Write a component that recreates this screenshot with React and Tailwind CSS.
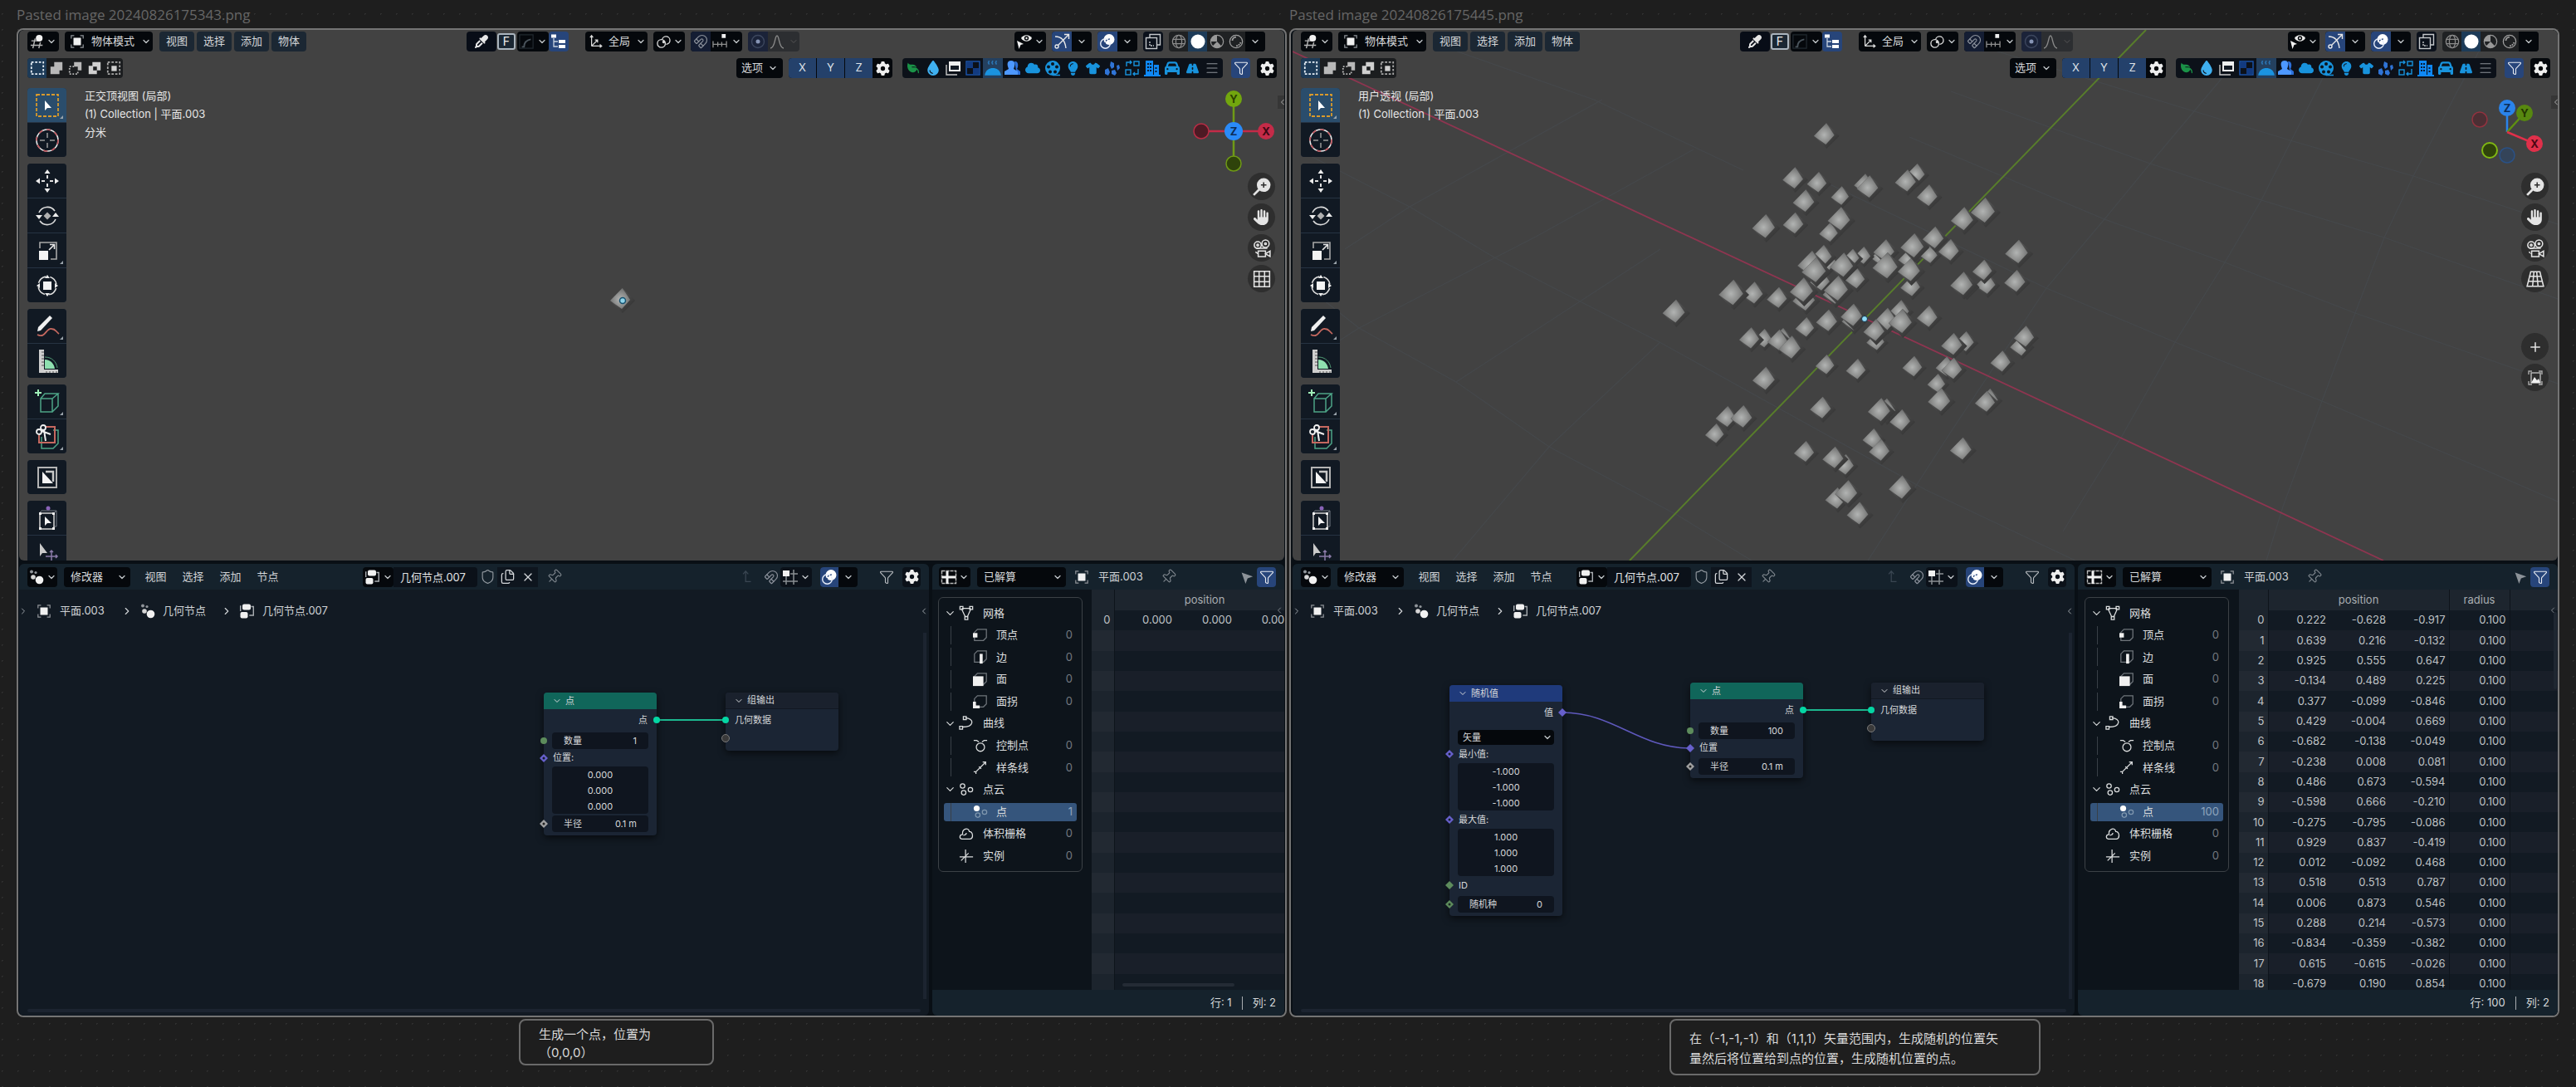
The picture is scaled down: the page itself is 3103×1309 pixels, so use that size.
import React from "react";
import {
  FaLeaf, FaDroplet, FaUserGroup, FaCloud, FaLightbulb, FaShirt, FaBuilding,
  FaCar, FaRoad, FaGear, FaHand, FaEyeDropper,
} from "react-icons/fa6";
import { Pin, Magnet, Funnel, Files, Shield, X, ChevronDown, ChevronRight, ChevronLeft, Menu, Plus } from "lucide-react";

/* ---------- small drawing helpers ---------- */

function Svg({ size = 20, children, className = "" }) {
  return (
    <svg width={size} height={size} viewBox="0 0 20 20" fill="none" stroke="currentColor" strokeWidth="1.4" aria-hidden="true" className={`shrink-0 ${className}`}>
      {children}
    </svg>
  );
}

const Chevron = () => <ChevronDown size={12} strokeWidth={2.5} className="shrink-0 text-[#c4c8cc]" aria-hidden="true" />;

const ObjectIcon = () => (
  <Svg size={18}>
    <path d="M2 6V2h4M14 2h4v4M18 14v4h-4M6 18H2v-4" stroke="#8d9196" />
    <rect x="5" y="5" width="10" height="10" fill="#f0f0f0" stroke="none" />
  </Svg>
);
const ViewportIcon = () => (
  <Svg size={18}>
    <path d="M2 9h9M1 15h16M7 6 4 19M14 11l-2 8" stroke="#b5b5b5" strokeWidth="1.6" />
    <circle cx="12.500" cy="5.500" r="4.500" fill="#f2f2f2" stroke="none" />
  </Svg>
);
const GeoNodesIcon = () => (
  <Svg size={20}>
    <circle cx="4" cy="3.500" r="2" fill="#8f9499" stroke="none" />
    <circle cx="9" cy="4.500" r="1.600" fill="#8f9499" stroke="none" />
    <circle cx="6" cy="10" r="2.800" fill="#d6d6d6" stroke="none" />
    <circle cx="13.500" cy="13.500" r="4.800" fill="#f2f2f2" stroke="none" />
  </Svg>
);
const NodeTreeIcon = () => (
  <Svg size={20}>
    <rect x="4" y="1.500" width="10" height="7" rx="2" fill="#f0f0f0" stroke="none" />
    <rect x="1.500" y="11" width="9" height="7.500" rx="2" fill="#f0f0f0" stroke="none" />
    <path d="M2.500 4h-.8v6M14.500 4.500h2.800v10.500h-5" stroke="#a9adb1" />
  </Svg>
);
const SheetIcon = () => (
  <Svg size={20}>
    <rect x="1.500" y="2.500" width="17" height="15" stroke="#b9b9b9" strokeDasharray="4 1" />
    <path d="M2 10h16.500M8 3v15" stroke="#f2f2f2" strokeWidth="3" />
  </Svg>
);
const CurveBox = () => (
  <Svg size={18}><rect x="1" y="1" width="18" height="18" stroke="#20282f" /><path d="M4 17h3c0-6 3-9 9-10" stroke="#4a545c" strokeWidth="2" /></Svg>
);
const TreeIcon = () => (
  <Svg size={20}>
    <rect x="1" y="1.500" width="6" height="4" fill="#fff" stroke="none" />
    <path d="M4 6v10h5M4 10h5" stroke="#c9d3e0" strokeWidth="1.300" />
    <rect x="10" y="8" width="8" height="4" fill="#fff" stroke="none" /><rect x="10" y="14" width="8" height="4" fill="#fff" stroke="none" />
  </Svg>
);
const AxesIcon = () => (
  <Svg size={18}><path d="M4 16V2M2 4.500 4 2l2 2.500M4 16h13M15 14l2.500 2-2.500 2M4 16 12 8M8.500 8H12v3.500" stroke="#dcdcdc" /></Svg>
);
const LinkIcon = () => (
  <Svg size={19}><circle cx="7" cy="12" r="5" stroke="#dcdcdc" /><path d="M8 7a5 5 0 1 1 5 6" stroke="#dcdcdc" /><circle cx="10" cy="10" r="1.800" fill="#dcdcdc" stroke="none" /></Svg>
);
const IncrementIcon = () => (
  <Svg size={19}><rect x="12" y="0" width="5" height="5" fill="#f0f0f0" stroke="none" /><path d="M1 13h17M1 9v8M7 10v6M12 10v6M18 9v8" stroke="#8e8e8e" /></Svg>
);
const OverlayIcon = () => (
  <Svg size={20}><circle cx="12" cy="7.500" r="6.500" fill="#fff" stroke="none" /><circle cx="7.500" cy="12.500" r="5.800" stroke="#e8eefa" /><path d="M7 13a6 6 0 0 1 6-6" stroke="#27457a" strokeDasharray="2 1.500" /></Svg>
);
const GizmoIcon = () => (
  <Svg size={20}><circle cx="4" cy="16" r="2" stroke="#e8e8e8" /><path d="M5.500 14.500 18 2M13 1.500h5.500V7M2 4c8 0 12 5 13 14" stroke="#e8e8e8" /></Svg>
);
const VisibilityIcon = () => (
  <Svg size={20}><path d="M6 6c3-5 10-5 13 0-3 5-10 5-13 0Z" fill="#ececec" stroke="none" /><circle cx="12.500" cy="6" r="2.700" fill="#05080c" stroke="none" /><circle cx="12.500" cy="6" r="1.200" fill="#ececec" stroke="none" /><path d="M1 9l8 4-3.500 1L3.500 19Z" fill="#f2f2f2" stroke="none" /></Svg>
);
const XrayIcon = () => (
  <Svg size={20}><rect x="1.500" y="5.500" width="13" height="13" stroke="#c4c7ca" /><path d="M6 5V1.500h12.500V14H15" stroke="#c4c7ca" /><path d="M6 10v5h5" stroke="#c4c7ca" strokeDasharray="2 1" /></Svg>
);
const GridSnapIcon = () => (
  <Svg size={20}><path d="M5 9v10M14 1v18M1 15h18M10 6h9" stroke="#8a8f93" strokeWidth="1.500" /><rect x="1" y="2" width="8" height="7" fill="#f0f0f0" stroke="none" /></Svg>
);
const ParentArrow = () => <Svg size={18}><path d="M8 2v14h7M4.500 6 8 2l3.500 4" stroke="#3a4652" /></Svg>;
const CursorIcon = () => <Svg size={16}><path d="M2 3l17 6-8 3-3 8Z" fill="#8c9298" stroke="none" /></Svg>;

/* ---------- viewport header ---------- */

const dark = "flex h-6 items-center justify-center rounded bg-[#05080c]";

function MenuButton({ children }) {
  return <button className="h-6 w-[42px] rounded bg-[#1b2733] text-center text-[#d4d6d8]">{children}</button>;
}

function Pick({ label, options, className, icon }) {
  return (
    <div className={`flex h-6 items-center rounded bg-[#05080c] ${className}`}>
      {icon}
      <select aria-label={label} className="min-w-0 flex-1 appearance-none bg-transparent text-[#d8dadc] outline-none">
        {options.map((o) => <option key={o}>{o}</option>)}
      </select>
      <Chevron />
    </div>
  );
}

function IconButton({ label, className = "", children }) {
  return <button aria-label={label} className={`flex h-6 shrink-0 items-center justify-center ${className}`}>{children}</button>;
}

const SELECT_MODES = [
  <><rect x="2" y="2" width="16" height="16" stroke="#e6eef5" strokeDasharray="3 2" strokeWidth="2" /></>,
  <><path d="M7 2h11v11h-4v5H2V8h5Z" fill="#b8b8b8" stroke="none" /></>,
  <><path d="M8 2h10v11h-5V8H8Z" fill="#b8b8b8" stroke="none" /><path d="M8 8H2v10h11v-5" stroke="#b8b8b8" strokeDasharray="2 2" strokeWidth="2" /></>,
  <><path d="M7 2h11v11h-5v5H2V7h5Z M8 8v5h5V8Z" fill="#d0d0d0" fillRule="evenodd" stroke="none" /></>,
  <><rect x="2" y="2" width="16" height="16" stroke="#a8a8a8" strokeDasharray="3 2" strokeWidth="2" /><rect x="7" y="7" width="7" height="7" fill="#d0d0d0" stroke="none" /></>,
];

const ASSET_ICONS = [
  ["植物", <FaLeaf size={14} className="-scale-x-100 text-[#1a9247]" />],
  ["液体", <FaDroplet size={18} className="text-[#3fb0f0]" />],
  ["窗口", <Svg><path d="M5 2h14v12H5Z" fill="#eee" stroke="none" /><path d="M7 7h10v5H7Z" fill="#131a24" stroke="none" /><path d="M2 6v12h13" stroke="#c8c8c8" /></Svg>],
  ["棋盘", <Svg><rect x="2" y="2" width="16" height="16" stroke="#1b55b0" /><path d="M3 3h7v7H3ZM10 10h7v7h-7Z" fill="#123a80" stroke="none" /></Svg>],
  ["烟雾", <Svg size={22}><path d="M1 18c1-6 5-8 9-8s8 2 9 8Z" fill="#1a93e0" stroke="none" /><path d="M6 2l-1 2 1 2M10 2 9 4l1 2M14 2l-1 2 1 2" stroke="#2c76b5" /></Svg>],
  ["人物", <Svg><path d="M12 2c5-1 5 6 3 9l4 3v4h-4Z" fill="#2c6fd8" stroke="none" /><path d="M8 1c4 0 5 3 4 7l-1 3 5 3v4H0v-4l5-3-1-3C3 4 4 1 8 1Z" fill="#4d98ff" stroke="none" /></Svg>],
  ["云", <FaCloud size={18} className="text-[#1893dd]" />],
  ["胶片", <Svg><circle cx="10" cy="10" r="9" fill="#1893dd" stroke="none" /><path d="M10 18.500h9" stroke="#1893dd" />{[[10, 5], [15, 8.5], [13, 14.5], [7, 14.5], [5, 8.5]].map(([x, y]) => <circle key={x} cx={x} cy={y} r="2" fill="#0c141d" stroke="none" />)}</Svg>],
  ["灯光", <FaLightbulb size={17} className="text-[#1893dd]" />],
  ["布料", <FaShirt size={17} className="text-[#1893dd]" />],
  ["石块", <Svg><path d="M8 2l4 2v5l-3 2-2-4ZM1 12l4-2 2 5-2 4-4-2ZM9 13l4-1 2 4-2 3-4-2ZM15 7l3-1 1 4-3 3Z" fill="#2f74d6" stroke="none" /></Svg>],
  ["替换", <Svg><rect x="12" y="2" width="6" height="5" stroke="#1893dd" /><rect x="2" y="12" width="6" height="6" stroke="#1893dd" /><path d="M3 8V3h6M7 1l2 2-2 2M17 11v6h-6M13 15l-2 2 2 2" stroke="#1893dd" /></Svg>],
  ["建筑", <Svg><path d="M2 1h9v18H2ZM12 6h6v13h-6ZM0 18h20v2H0Z" fill="#0f88f5" stroke="none" /><path d="M4 5h5M4 9h5M4 13h5M13.500 10h3M13.500 14h3" stroke="#0a1c33" strokeDasharray="2 1" strokeWidth="2" /></Svg>],
  ["车辆", <FaCar size={18} className="text-[#1893dd]" />],
  ["道路", <FaRoad size={15} className="text-[#1893dd]" />],
  ["列表", <Menu size={18} strokeWidth={1.5} className="text-[#8d9399]" />],
];

const SHADING = [
  ["线框", <><circle cx="10" cy="10" r="8.500" stroke="#8c8c8c" /><ellipse cx="10" cy="10" rx="4" ry="8.500" stroke="#8c8c8c" /><path d="M2 7h16M2 13h16" stroke="#8c8c8c" /></>],
  ["实体", <><circle cx="10" cy="10" r="9.500" fill="#fff" stroke="none" /></>],
  ["材质", <><circle cx="10" cy="10" r="8.500" stroke="#989898" /><path d="M10 1.500v8.500H1.500A8.500 8.500 0 0 1 10 1.500Zm0 8.500 6 6a8.500 8.500 0 0 1-12 0Z" fill="#989898" stroke="none" /></>],
  ["渲染", <><circle cx="10" cy="10" r="8.500" stroke="#a0a0a0" /><path d="M5 9a5 5 0 0 1 5-5" stroke="#a0a0a0" strokeWidth="2" /><path d="M16 11a7 7 0 0 1-6 5" stroke="#a0a0a0" strokeWidth="2" strokeDasharray="2 1" /></>],
];

function ViewportHeader() {
  return (
    <>
      <div className="flex h-[26px] items-start pt-0.5">
        <button aria-label="编辑器类型" className={`${dark} w-[38px] gap-0.5`}><ViewportIcon /><Chevron /></button>
        <Pick label="模式" options={["物体模式"]} className="ml-[7px] w-[106px] gap-2 pl-1.5 pr-0.5" icon={<ObjectIcon />} />
        <nav className="ml-2 flex gap-[3px]">
          {["视图", "选择", "添加", "物体"].map((m) => <MenuButton key={m}>{m}</MenuButton>)}
        </nav>
        <div className="ml-[193px] flex h-6 items-center">
          <IconButton label="吸管" className="w-9 rounded bg-[#080d17]"><FaEyeDropper size={16} className="text-[#e6e6e6]" /></IconButton>
          <button className="ml-px flex h-5 w-[22px] items-center justify-center rounded-[3px] border-2 border-[#aab4bd] bg-[#1b2733] text-[14px] leading-none text-[#eee]">F</button>
          <IconButton label="曲线" className="ml-0.5 w-[38px] gap-1 rounded bg-[#05080c]"><CurveBox /><Chevron /></IconButton>
          <IconButton label="大纲" className="w-6 rounded bg-[#27457a]"><TreeIcon /></IconButton>
          <Pick label="变换坐标系" options={["全局"]} className="ml-5 w-[75px] gap-1.5 pl-1 pr-0.5" icon={<AxesIcon />} />
          <IconButton label="轴心点" className="ml-[7px] w-[38px] gap-0.5 rounded bg-[#05080c]"><LinkIcon /><Chevron /></IconButton>
          <div className="ml-[7px] flex rounded bg-[#05080c]">
            <IconButton label="吸附" className="w-6 rounded-l bg-[#141d33]"><Magnet size={18} strokeWidth={1.500} className="text-[#8b919b]" /></IconButton>
            <IconButton label="吸附方式" className="w-[38px] gap-1"><IncrementIcon /><Chevron /></IconButton>
          </div>
          <div className="ml-[7px] flex rounded bg-[#2c2e31]">
            <IconButton label="衰减编辑" className="w-6 rounded-l bg-[#1b2339]"><Svg><circle cx="10" cy="10" r="7.500" stroke="#3d475e" /><circle cx="10" cy="10" r="2.500" fill="#8795b5" stroke="none" /></Svg></IconButton>
            <IconButton label="衰减类型" className="w-[38px] gap-1"><Svg><path d="M2 18C8 18 7 3 10 3s2 15 8 15" stroke="#888" /></Svg><ChevronDown size={12} className="text-[#555]" aria-hidden="true" /></IconButton>
          </div>
        </div>
        <div className="ml-auto flex pr-[23px]">
          <button aria-label="可见性" className={`${dark} w-[38px] gap-0.5`}><VisibilityIcon /><Chevron /></button>
          <div className="ml-[7px] flex overflow-hidden rounded bg-[#05080c]">
            <IconButton label="显示控件" className="w-6 bg-[#27457a]"><GizmoIcon /></IconButton>
            <IconButton label="控件选项" className="w-6"><Chevron /></IconButton>
          </div>
          <div className="ml-[7px] flex overflow-hidden rounded bg-[#05080c]">
            <IconButton label="显示叠加层" className="w-6 bg-[#27457a]"><OverlayIcon /></IconButton>
            <IconButton label="叠加层选项" className="w-6"><Chevron /></IconButton>
          </div>
          <IconButton label="透视模式" className="ml-[7px] w-6 rounded bg-[#0b111b]"><XrayIcon /></IconButton>
          <div className="ml-[7px] flex overflow-hidden rounded bg-[#1f2123]">
            {SHADING.map(([n, d], i) => (
              <IconButton key={n} label={n} className={i === 1 ? "w-[23px] bg-[#1d3b58]" : "w-[23px]"}><Svg size={18}>{d}</Svg></IconButton>
            ))}
            <IconButton label="着色选项" className="w-6 bg-[#05080c]"><Chevron /></IconButton>
          </div>
        </div>
      </div>
      <div className="mt-2 flex h-6 items-center">
        <div className="flex h-6 overflow-hidden rounded bg-[#1b1d1f]">
          {SELECT_MODES.map((d, i) => (
            <IconButton key={i} label={`选择模式 ${i + 1}`} className={i === 0 ? "w-[23px] bg-[#1d3b58]" : "w-[23px]"}><Svg size={18}>{d}</Svg></IconButton>
          ))}
        </div>
        <div className="ml-auto flex pr-[9px]">
          <button className={`${dark} w-14 gap-1.5 text-[#d8dadc]`}>选项<Chevron /></button>
          <div className="ml-[7px] flex overflow-hidden rounded bg-[#05080c]">
            <div className="flex gap-px">
              {["X", "Y", "Z"].map((a) => <button key={a} className="h-6 w-[33px] bg-[#24416b] text-[#dfe3e8]">{a}</button>)}
            </div>
            <IconButton label="镜像设置" className="w-6"><FaGear size={17} className="text-[#eee]" /></IconButton>
          </div>
          <div className="ml-3 flex overflow-hidden rounded bg-[#0c1119] px-px">
            {ASSET_ICONS.map(([n, icon]) => (
              <IconButton key={n} label={n} className={n === "烟雾" ? "w-6 bg-[#24405f]" : "w-6"}>{icon}</IconButton>
            ))}
          </div>
          <IconButton label="过滤" className="ml-2.5 w-[23px] rounded bg-[#27457a]"><Funnel size={18} strokeWidth={1.500} className="text-[#e6eaf0]" /></IconButton>
          <IconButton label="设置" className="ml-2 w-6 rounded bg-[#05080c]"><FaGear size={17} className="text-[#eee]" /></IconButton>
        </div>
      </div>
    </>
  );
}

/* ---------- tool shelf ---------- */

const TOOL_GROUPS = [
  [
    ["框选", <><rect x="2" y="2" width="26" height="26" stroke="#d99a2b" strokeDasharray="4 2" strokeWidth="1.800" /><path d="M12 9v12l3-3h5Z" fill="#fff" stroke="none" /></>, true],
    ["游标", <><circle cx="15" cy="15" r="13" stroke="#e8e8e8" strokeWidth="1.600" /><circle cx="15" cy="15" r="13" stroke="#c0545c" strokeDasharray="5 5" strokeWidth="1.600" /><path d="M15 6v6M15 18v6M6 15h6M18 15h6" stroke="#9a9a9a" strokeWidth="1.500" /></>],
  ],
  [
    ["移动", <><path d="M15 8v4M15 18v4M8 15h4M18 15h4" stroke="#e0e0e0" strokeWidth="2" /><path d="m15 1 3.500 5h-7ZM15 29l3.500-5h-7ZM1 15l5-3.500v7ZM29 15l-5-3.500v7Z" fill="#ececec" stroke="none" /></>],
    ["旋转", <><path d="M5 11a11 11 0 0 1 19-2M25 19a11 11 0 0 1-19 2" stroke="#dcdcdc" strokeWidth="1.600" /><path d="M15 10.500l4.500 4.500-4.500 4.500-4.500-4.500Z" fill="#b0b0b0" stroke="none" /><path d="m1 14h8l-4 5ZM21 16h8l-4-5Z" fill="#ececec" stroke="none" /></>],
    ["缩放", <><path d="M6 12V5h20v20h-7" stroke="#a8a8a8" strokeWidth="1.600" /><rect x="5" y="15" width="11" height="11" fill="#f4f4f4" stroke="none" /><path d="M17 14l6-6M18 7.500h5.500V13" stroke="#e8e8e8" strokeWidth="1.600" /></>, true],
    ["变换", <><circle cx="15" cy="15" r="11" stroke="#dcdcdc" strokeDasharray="12 5.300" strokeDashoffset="-3" strokeWidth="1.600" /><rect x="10" y="10" width="10" height="10" fill="#f4f4f4" stroke="none" /><path d="m15 2 3 4h-6ZM15 28l3-4h-6ZM2 15l4-3v6ZM28 15l-4-3v6Z" fill="#ececec" stroke="none" /></>],
  ],
  [
    ["标注", <><path d="M18 2l3 3L7 20l-4 1 1-5Z" fill="#f0f0f0" stroke="none" /><path d="M3 25c10 5 10-8 17-7 5 0 5 3 9 6" stroke="#c4685f" strokeWidth="1.800" /></>, true],
    ["测量", <><path d="M5 1h6v24h17v4H5Z" fill="#cfcfcf" stroke="none" /><path d="M11 4H8M11 8H8M11 12H8M11 16H8M11 20H8M14 29v-2M18 29v-2M22 29v-2M26 29v-2" stroke="#555" /><path d="M12 13c7 0 11 5 12 11H12Z" fill="#8fe0b0" stroke="none" /><path d="M12 10c9 0 14 6 15 13" stroke="#4f9a74" /></>],
  ],
  [
    ["添加立方体", <><path d="M0 4h8M4 0v8" stroke="#9ff0b8" strokeWidth="2" /><path d="M7 11h14v16H7ZM7 11l5-6h16l-7 6M28 5v15l-7 7" stroke="#4da487" strokeWidth="1.500" /></>, true],
    ["切刀", <><path d="M8 15v14h14l6-6V7h-6" stroke="#4da487" strokeWidth="1.500" /><path d="M12 3h12v19H5V13" stroke="#c4685f" strokeWidth="2" /><circle cx="10" cy="4" r="3" stroke="#f0f0f0" strokeWidth="1.800" /><circle cx="5" cy="9" r="3" stroke="#f0f0f0" strokeWidth="1.800" /><path d="M11 7l2 13M8 8l11 4" stroke="#f0f0f0" strokeWidth="2" /></>, true],
  ],
  [["遮罩", <><rect x="4" y="3" width="22" height="24" stroke="#b4b4b4" strokeWidth="2" /><path d="M9 8v14h13Z" fill="#f4f4f4" stroke="none" /><path d="M13 8h9v12" stroke="#c8c8c8" strokeWidth="2.500" /></>]],
  [
    ["框架编辑", <><path d="M8 6h18v19h-4M8 6l-3 3M26 6l-3 3" stroke="#777d86" /><circle cx="16" cy="3" r="2.500" fill="#8a63b8" stroke="none" /><rect x="6" y="9" width="17" height="19" stroke="#c8c8c8" strokeWidth="1.600" /><path d="M5 8h3v3H5ZM21 8h3v3h-3ZM5 26h3v3H5ZM21 26h3v3h-3Z" fill="#eee" stroke="none" /><path d="M12 13v11l3-3h5Z" fill="#f4f4f4" stroke="none" /></>],
    ["选择移动", <><path d="M6 3v16l3-4h6Z" fill="#c9c9c9" stroke="none" /><path d="M20 12v14M13 19h14M18 14l2-2 2 2M25 17l2 2-2 2" stroke="#8a7aa8" strokeWidth="1.500" /></>],
  ],
];

function ToolShelf() {
  return (
    <div className="flex w-[47px] flex-col gap-2 pt-0.5">
      {TOOL_GROUPS.map((group, g) => (
        <div key={g} className="flex flex-col gap-px overflow-hidden rounded bg-[#263342]">
          {group.map(([name, drawing, corner], i) => (
            <button key={name} aria-label={name} className={`relative flex h-[41px] items-center justify-center ${g === 0 && i === 0 ? "bg-[#2a4d6c]" : "bg-[#111923]"}`}>
              <svg width="30" height="30" viewBox="0 0 30 30" fill="none" aria-hidden="true">{drawing}</svg>
              {corner && <span className="absolute bottom-1 right-1 border-b-4 border-l-4 border-b-[#9aa3ab] border-l-transparent" />}
            </button>
          ))}
        </div>
      ))}
    </div>
  );
}

/* ---------- gizmos ---------- */

function TopGizmo() {
  return (
    <svg width="100" height="100" viewBox="0 0 100 100" className="font-bold" fontSize="13" textAnchor="middle" aria-label="视图方向">
      <path d="M50 12v76" stroke="#6f9a16" strokeWidth="2.500" /><path d="M11 50h78" stroke="#c42b48" strokeWidth="2.500" />
      <circle cx="50" cy="11" r="10" fill="#72a60e" /><circle cx="50" cy="89" r="9" fill="#2f430b" stroke="#6f9a16" strokeWidth="1.500" />
      <circle cx="11" cy="50" r="9" fill="#4d1a24" stroke="#b92c45" strokeWidth="1.500" /><circle cx="89" cy="50" r="10" fill="#c42b48" />
      <circle cx="50" cy="50" r="11" fill="#2a8bf8" />
      <text x="50" y="16" fill="#2b4200">Y</text><text x="89" y="55" fill="#3c0713">X</text><text x="50" y="55" fill="#0c2c57">Z</text>
    </svg>
  );
}
function UserGizmo() {
  return (
    <svg width="100" height="100" viewBox="0 0 100 100" className="font-bold" fontSize="13" textAnchor="middle" aria-label="视图方向">
      <circle cx="17" cy="36" r="9" fill="#4b2f34" stroke="#92323f" strokeWidth="1.500" />
      <circle cx="50" cy="79" r="9" fill="#344459" stroke="#2a5186" strokeWidth="1.500" />
      <path d="M50 51V22" stroke="#2a83ea" strokeWidth="2.500" /><path d="M50 51 71 28" stroke="#5f8f12" strokeWidth="2.500" /><path d="m50 51 33 14" stroke="#e0304a" strokeWidth="2.500" />
      <circle cx="29" cy="73" r="9" fill="#2f430b" stroke="#80b813" strokeWidth="2" />
      <circle cx="71" cy="28" r="10" fill="#578810" /><circle cx="50" cy="22" r="10" fill="#2a83ea" /><circle cx="83" cy="65" r="10" fill="#e0304a" />
      <text x="71" y="33" fill="#223600">Y</text><text x="50" y="27" fill="#0c2c57">Z</text><text x="83" y="70" fill="#4c0713">X</text>
    </svg>
  );
}

function NavButton({ label, className = "", children }) {
  return <button aria-label={label} className={`flex h-[33px] w-[33px] items-center justify-center rounded-full bg-[#2e2e2e] text-[#e4e4e4] ${className}`}>{children}</button>;
}

function NavButtons({ user }) {
  return (
    <div className="flex flex-col gap-1">
      <NavButton label="缩放"><Svg size={22}><circle cx="12" cy="8" r="7.500" fill="#e4e4e4" stroke="none" /><path d="M12 5v6M9 8h6" stroke="#2e2e2e" /><path d="m7 13-6 6" strokeWidth="2.500" /></Svg></NavButton>
      <NavButton label="平移"><FaHand size={19} /></NavButton>
      <NavButton label="摄像机"><Svg size={22}><circle cx="5.500" cy="6.500" r="3.800" /><circle cx="14" cy="5" r="4" /><circle cx="5.500" cy="6.500" r="1" /><circle cx="14" cy="5" r="1" /><path d="M6 13h8v6H6ZM14 16l5-3v6ZM3 14l3 2M4 10h12" /></Svg></NavButton>
      <NavButton label="切换投影">
        {user
          ? <Svg size={22}><path d="M5 2h10l4 16H1ZM3.500 7h13M2.500 12.500h15M8.500 2l-1.500 16M11.500 2l1.500 16" /></Svg>
          : <Svg size={22}><path d="M1.500 1.500h17v17h-17ZM7 1.500v17M13 1.500v17M1.500 7h17M1.500 13h17" /></Svg>}
      </NavButton>
      {user && (
        <>
          <NavButton label="添加" className="mt-[45px]"><Plus size={18} strokeWidth={2} /></NavButton>
          <NavButton label="参考图像"><Svg size={20}><path d="M2 6V2h4M14 2h4v4M18 14v4h-4M6 18H2v-4" stroke="#aaa" /><rect x="5" y="4" width="11" height="12" stroke="#bbb" /><path d="m5 16 4-7 3 4 2-2 2 5Z" fill="#f0f0f0" stroke="none" /></Svg></NavButton>
        </>
      )}
    </div>
  );
}

/* ---------- 3D canvas ---------- */

function Octahedron({ x, y, r }) {
  const a = r / 46;
  const light = [[-46, 0], [-1, -46], [28, -3], [-3, 31]].map(([px, py]) => `${x + px * a},${y + py * a}`).join(" ");
  const full = [[-46, 0], [-1, -46], [46, 0], [0, 46]].map(([px, py]) => `${x + px * a},${y + py * a}`).join(" ");
  return <g><polygon points={full} fill="url(#edge)" /><polygon points={light} fill="url(#facet)" /></g>;
}

const Shades = () => (
  <defs>
    <radialGradient id="facet" cx="0.5" cy="0.55" r="0.6"><stop offset="0" stopColor="#b2b4b3" /><stop offset="0.5" stopColor="#8e8f8e" /><stop offset="1" stopColor="#666767" /></radialGradient>
    <linearGradient id="edge" x1="0" y1="0" x2="1" y2="1"><stop offset="0.4" stopColor="#505050" /><stop offset="1" stopColor="#282828" /></linearGradient>
  </defs>
);

/* [x, y, radius] in thirds of a pixel, farthest first */
const POINTS = [
  [361, 71, 46], [248, 230, 46], [334, 245, 44], [287, 313, 48], [143, 405, 51], [249, 393, 46], [417, 293, 40],
  [502, 250, 42], [518, 262, 48], [690, 213, 42], [655, 240, 47], [733, 293, 46], [376, 425, 42], [415, 378, 50],
  [936, 348, 54], [860, 378, 50], [738, 505, 38], [811, 490, 46], [755, 445, 47], [1057, 497, 51], [1050, 602, 47],
  [944, 612, 44], [932, 562, 44], [868, 618, 46], [858, 612, 50], [560, 512, 38], [577, 492, 47], [583, 548, 56],
  [660, 520, 40], [672, 620, 44], [668, 562, 50], [680, 475, 52], [497, 508, 37], [457, 515, 36], [472, 592, 44],
  [370, 530, 42], [352, 510, 45], [345, 600, 44], [425, 545, 52], [310, 540, 54], [325, 563, 54], [395, 645, 48],
  [405, 630, 54], [288, 668, 50], [280, 635, 52], [190, 662, 45], [102, 645, 47], [26, 645, 55], [-182, 712, 50],
  [462, 742, 46], [460, 725, 48], [370, 745, 47], [290, 768, 42], [138, 808, 40], [90, 808, 45], [205, 805, 40],
  [192, 815, 45], [237, 842, 49], [363, 903, 42], [475, 920, 44], [632, 708, 44], [583, 740, 48], [637, 754, 46],
  [637, 748, 52], [545, 818, 40], [541, 780, 47], [733, 730, 46], [679, 910, 44], [867, 820, 43], [822, 830, 47],
  [797, 910, 42], [822, 918, 46], [765, 970, 40], [777, 1032, 50], [1068, 835, 44], [1083, 802, 45], [998, 892, 45],
  [953, 1028, 44], [942, 1037, 45], [143, 955, 50], [348, 1060, 47], [-36, 1152, 42], [5, 1092, 45], [62, 1092, 48],
  [580, 1067, 48], [560, 1068, 50], [635, 1105, 46], [533, 1170, 42], [560, 1213, 46], [288, 1218, 45],
  [432, 1265, 44], [393, 1240, 47], [402, 1387, 46], [441, 1365, 50], [482, 1442, 48], [636, 1348, 50], [855, 1208, 48],
];

function UserScene() {
  return (
    <svg width="1524" height="639" viewBox="1557 36 1524 639" className="absolute left-0 top-0" aria-hidden="true">
      <Shades />
      <g stroke="#45484b" strokeWidth="1.200" fill="none">
        <path d="M2400 60 2630 130 2762 170 2907 212 3081 270M2350 110 2590 197 2724 241 2872 286 3081 360M2300 165 2535 264 2680 316 2837 377 3081 462M2200 220 2465 347 2620 412 2797 483 2989 564 3081 604M1567 182 1698 249 1800 310 1999 412 2320 590 2500 675M1580 350 1637 395 1754 460 1866 538 2020 620 2110 675M1750 60 1920 120 2100 205" />
        <path d="M3000 36 2960 110 2907 212 2872 286 2837 377 2797 483 2750 610 2730 675M2800 90 2724 241 2680 316 2620 412 2555 527 2485 640M2680 90 2590 197 2535 264 2465 347 2350 520 2250 675M1620 300 1698 249 1930 120M1637 395 1850 285 2040 180M1567 440 1637 395M1754 460 2000 300M1750 675 1866 538 2000 412" />
      </g>
      <path d="M1557 62 2871 675" stroke="#8e3550" strokeWidth="1.800" />
      <path d="M1963 675 2585 36" stroke="#587d2b" strokeWidth="2" />
      <g transform="translate(2080 140) scale(0.3333)">{POINTS.map(([x, y, r], i) => <Octahedron key={i} x={x} y={y} r={r} />)}</g>
      <circle cx="2246" cy="384" r="3.500" fill="#8fdcf8" stroke="#16324a" />
    </svg>
  );
}
function TopScene() {
  return (
    <svg width="40" height="40" viewBox="0 0 40 40" className="absolute left-[707px] top-[306px]" aria-hidden="true">
      <Shades />
      <Octahedron x={20} y={20} r={15} />
      <circle cx="20" cy="20" r="3.500" fill="#8fd4ea" stroke="#14506e" strokeWidth="1.500" />
    </svg>
  );
}

function Viewport({ user, lines }) {
  return (
    <section className="relative h-[639px] overflow-hidden rounded-md bg-[#424242]">
      {user ? <UserScene /> : <TopScene />}
      <div className="relative pl-2.5">
        <ViewportHeader />
        <div className="mt-2.5 flex gap-[22px]">
          <ToolShelf />
          <div className="leading-[22px] text-[#e6e6e6]">{lines.map((l) => <p key={l}>{l}</p>)}</div>
        </div>
      </div>
      <div className="absolute right-[11px] top-[72px]">{user ? <UserGizmo /> : <TopGizmo />}</div>
      <div className="absolute right-[11px] top-[172px]"><NavButtons user={user} /></div>
      <button aria-label="展开侧栏" className="absolute right-0 top-[79px] flex h-4 w-2 items-center bg-[#363636] text-[#aaa]"><ChevronLeft size={12} className="shrink-0" /></button>
    </section>
  );
}

/* ---------- node editor ---------- */

const SOCKETS = {
  geo: <circle cx="6" cy="6" r="4" fill="#04d6a4" />,
  int: <circle cx="6" cy="6" r="4" fill="#5d8c5c" />,
  empty: <circle cx="6" cy="6" r="4.500" fill="#3a3a3a" stroke="#7a7a7a" />,
  vector: <path d="m6 1 5 5-5 5-5-5Z" fill="#6760cc" />,
  vectorField: <><path d="m6 1 5 5-5 5-5-5Z" fill="#6760cc" /><circle cx="6" cy="6" r="1.500" fill="#151c2c" /></>,
  floatField: <><path d="m6 1 5 5-5 5-5-5Z" fill="#a1a1a1" /><circle cx="6" cy="6" r="1.500" fill="#222" /></>,
  intPlain: <path d="m6 1 5 5-5 5-5-5Z" fill="#5d8c5c" />,
  intField: <><path d="m6 1 5 5-5 5-5-5Z" fill="#5d8c5c" /><circle cx="6" cy="6" r="1.500" fill="#1a2a20" /></>,
};

function Socket({ kind, out }) {
  return (
    <svg width="12" height="12" viewBox="0 0 12 12" aria-hidden="true" className={`absolute top-1/2 -translate-y-1/2 ${out ? "-right-1.5" : "-left-1.5"}`}>{SOCKETS[kind]}</svg>
  );
}

function Node({ title, headClass, className, children }) {
  return (
    <div className={`absolute w-[136px] rounded bg-[#1b2534] text-[11px] text-[#d6d8da] shadow-[0_3px_8px_rgba(0,0,0,0.6)] ${className}`}>
      <div className={`flex h-5 items-center gap-1 rounded-t pl-2.5 ${headClass}`}><ChevronDown size={12} strokeWidth={2} aria-hidden="true" />{title}</div>
      {children}
    </div>
  );
}

function Out({ kind, children }) {
  return <div className="relative flex h-[26px] items-center justify-end pr-[11px]">{children}<Socket kind={kind} out /></div>;
}
function In({ kind, className = "h-[21px]", children }) {
  return <div className={`relative flex items-center pl-[11px] ${className}`}><Socket kind={kind} />{children}</div>;
}
function Field({ kind, label, value }) {
  return (
    <div className="relative mt-0.5 px-2.5">
      <Socket kind={kind} />
      <label className="flex h-5 items-center justify-between rounded-sm bg-[#0f151f] px-3.5">
        <span className="shrink-0">{label}</span>
        <input defaultValue={value} className="w-12 min-w-0 bg-transparent text-right outline-none" />
      </label>
    </div>
  );
}
function Vector({ label, values }) {
  return (
    <div className="px-2.5">
      <div className="rounded-sm bg-[#0f151f]">
        {values.map((v, i) => <input key={i} aria-label={`${label} ${"XYZ"[i]}`} defaultValue={v} className="block h-[19px] w-full bg-transparent text-center outline-none" />)}
      </div>
    </div>
  );
}

const GEO_HEAD = "bg-[#10665a]";
const OUT_HEAD = "bg-[#1a212d] border-b border-[#111822]";

function OutputNode({ className }) {
  return (
    <Node title="组输出" headClass={OUT_HEAD} className={className}>
      <In kind="geo" className="h-[26px]">几何数据</In>
      <In kind="empty" className="mb-1.5 h-[18px]" />
    </Node>
  );
}

function SingleGraph() {
  return (
    <>
      <svg width="1000" height="400" viewBox="0 0 1000 400" className="absolute left-0 top-0" aria-hidden="true"><path d="M768 188h83" stroke="#1cb88f" strokeWidth="2" /></svg>
      <Node title="点" headClass={GEO_HEAD} className="left-[632px] top-[155px] pb-1">
        <Out kind="geo">点</Out>
        <Field kind="int" label="数量" value="1" />
        <In kind="vectorField">位置:</In>
        <Vector label="位置" values={["0.000", "0.000", "0.000"]} />
        <Field kind="floatField" label="半径" value="0.1 m" />
      </Node>
      <OutputNode className="left-[851px] top-[155px]" />
    </>
  );
}

function RandomGraph() {
  return (
    <>
      <svg width="900" height="400" viewBox="0 0 900 400" fill="none" className="absolute left-0 top-0" aria-hidden="true">
        <path d="M615 176h82" stroke="#1cb88f" strokeWidth="2" /><path d="M325 179c62 0 92 43 154 43" stroke="#5f59bd" strokeWidth="1.500" />
      </svg>
      <Node title="随机值" headClass="bg-[#1f3a7b]" className="left-[189px] top-[146px] pb-1">
        <Out kind="vector">值</Out>
        <div className="mt-2 px-2.5">
          <div className="flex h-[18px] items-center rounded-sm bg-[#05080c] pl-1.5 pr-0.5">
            <select aria-label="数据类型" className="min-w-0 flex-1 appearance-none bg-transparent outline-none"><option>矢量</option></select><Chevron />
          </div>
        </div>
        <In kind="vectorField" className="h-[22px]">最小值:</In>
        <Vector label="最小值" values={["-1.000", "-1.000", "-1.000"]} />
        <In kind="vectorField" className="h-[22px]">最大值:</In>
        <Vector label="最大值" values={["1.000", "1.000", "1.000"]} />
        <In kind="intPlain" className="h-[22px]">ID</In>
        <Field kind="intField" label="随机种" value="0" />
      </Node>
      <Node title="点" headClass={GEO_HEAD} className="left-[479px] top-[143px] pb-1">
        <Out kind="geo">点</Out>
        <Field kind="int" label="数量" value="100" />
        <In kind="vector">位置</In>
        <Field kind="floatField" label="半径" value="0.1 m" />
      </Node>
      <OutputNode className="left-[697px] top-[143px]" />
    </>
  );
}

function NodeEditor({ groupClass, children }) {
  return (
    <section className="relative flex min-w-0 flex-1 flex-col overflow-hidden rounded-md bg-[#121a23]">
      <header className="flex h-[31px] items-center bg-[#15222c] px-2.5">
        <button aria-label="编辑器类型" className={`${dark} w-9 gap-0.5`}><GeoNodesIcon /><Chevron /></button>
        <Pick label="节点树类型" options={["修改器"]} className="ml-2 w-20 pl-2 pr-1" />
        <nav className="ml-2 flex text-[#d0d3d6]">
          {["视图", "选择", "添加", "节点"].map((m) => <button key={m} className="w-[45px]">{m}</button>)}
        </nav>
        <div className={`flex items-center ${groupClass}`}>
          <button aria-label="浏览节点树" className={`${dark} w-[37px] gap-0.5`}><NodeTreeIcon /><Chevron /></button>
          <input aria-label="节点树名称" defaultValue="几何节点.007" className="h-6 w-[101px] rounded-r bg-[#0b1119] pl-2 text-[#e2e4e6] outline-none" />
          <IconButton label="伪用户" className="w-6"><Shield size={19} strokeWidth={1.500} className="text-[#8e959c]" /></IconButton>
          <IconButton label="新建节点树" className="w-[25px] bg-[#0e151e]"><Files size={19} strokeWidth={1.600} className="text-[#d4d7da]" /></IconButton>
          <IconButton label="断开" className="w-6 bg-[#0e151e]"><X size={16} strokeWidth={1.800} className="text-[#d4d7da]" /></IconButton>
          <IconButton label="固定" className="ml-1.5 w-[26px]"><Pin size={19} strokeWidth={1.500} className="rotate-45 text-[#7d858c]" /></IconButton>
        </div>
        <div className="ml-auto flex items-center">
          <IconButton label="上级" className="w-5"><ParentArrow /></IconButton>
          <IconButton label="吸附" className="ml-2 w-[22px]"><Magnet size={18} strokeWidth={1.500} className="text-[#8b919b]" /></IconButton>
          <IconButton label="吸附方式" className="w-[38px] gap-0.5 rounded bg-[#0b1119]"><GridSnapIcon /><Chevron /></IconButton>
          <div className="ml-2.5 flex overflow-hidden rounded bg-[#05080c]">
            <IconButton label="叠加层" className="w-[22px] bg-[#27457a]"><OverlayIcon /></IconButton>
            <IconButton label="叠加层选项" className="w-[23px]"><Chevron /></IconButton>
          </div>
          <IconButton label="过滤" className="ml-6 w-[22px]"><Funnel size={18} strokeWidth={1.500} className="text-[#b8bcc0]" /></IconButton>
          <IconButton label="设置" className="ml-2 w-[22px] rounded bg-[#0b1119]"><FaGear size={17} className="text-[#eee]" /></IconButton>
        </div>
      </header>
      <div className="flex h-[52px] items-center text-[#d0d3d6]">
        <ChevronRight size={12} className="-ml-px shrink-0 text-[#9aa0a6]" aria-hidden="true" />
        <span className="ml-2.5"><ObjectIcon /></span>
        <span className="ml-2.5 w-[74px]">平面.003</span>
        <ChevronRight size={14} strokeWidth={2} aria-hidden="true" />
        <span className="ml-2"><GeoNodesIcon /></span>
        <span className="ml-2 w-[70px]">几何节点</span>
        <ChevronRight size={14} strokeWidth={2} aria-hidden="true" />
        <span className="ml-2"><NodeTreeIcon /></span>
        <span className="ml-2">几何节点.007</span>
        <ChevronLeft size={12} className="ml-auto shrink-0 text-[#9aa0a6]" aria-hidden="true" />
      </div>
      {children}
      <div className="mr-[3px] flex-1 border-r-4 border-[#1c2430]" />
      <div className="mx-2.5 mb-1 mt-3 h-1 rounded bg-[#1c2430]" />
    </section>
  );
}

/* ---------- spreadsheet ---------- */

const DIM = "#6f757b";
const cube = <path d="M2 6v11h12l4-4V2H6Z" stroke={DIM} />;
const TREE_ICONS = {
  mesh: <path d="M4 4h12M3.500 4.500 9 16M16 5l-5 11M1.500 1.500h4v4h-4ZM14.500 1.500h4v4h-4ZM8 15h4v4H8Z" />,
  vertex: <>{cube}<rect x="0" y="7" width="6" height="6" fill="#f0f0f0" stroke="none" /></>,
  edge: <>{cube}<rect x="9" y="6" width="4" height="13" fill="#f0f0f0" stroke="none" /></>,
  face: <>{cube}<rect x="0" y="6" width="14" height="13" fill="#f0f0f0" stroke="none" /></>,
  corner: <>{cube}<path d="M0 10h4v5h5v4H0Z" fill="#f0f0f0" stroke="none" /></>,
  curve: <path d="M9 3c12 0 12 12-4 12M6 1h4v4H6ZM1 14h4v4H1Z" />,
  control: <><circle cx="10" cy="12" r="5.500" /><path d="M1 3h4l3 2M19 3h-4l-3 2" /></>,
  spline: <path d="M1 16h3v3M4 16 17 3M13 3h4v4M8 9l3 3" />,
  cloud: <><circle cx="5" cy="5" r="3" /><circle cx="6.500" cy="14" r="3" /><circle cx="15.500" cy="10" r="3" /></>,
  point: <><circle cx="5" cy="5" r="4" fill="#fff" stroke="none" /><circle cx="6.500" cy="14" r="3" stroke="#7f97ae" /><circle cx="15.500" cy="10" r="3" stroke="#7f97ae" /></>,
  volume: <path d="M4 17c-4-1-3-6 1-6-1-8 8-10 9-4 5 0 6 9 1 10ZM6 12c3 0 4-1 4-3" />,
  instance: <path d="M9 1v18M1 11h18M3 16l10-10" />,
};

const TREE = (points) => [
  ["mesh", "网格"], ["vertex", "顶点", 0], ["edge", "边", 0], ["face", "面", 0], ["corner", "面拐", 0],
  ["curve", "曲线"], ["control", "控制点", 0], ["spline", "样条线", 0],
  ["cloud", "点云"], ["point", "点", points], ["volume", "体积栅格", 0, true], ["instance", "实例", 0, true],
];

function DomainTree({ points }) {
  return (
    <div className="mt-[9px] grid h-[331px] w-[174px] auto-rows-fr rounded-md border border-[#3c4146] bg-[#0d141b] px-1.5 py-[5px]">
      {TREE(points).map(([icon, name, count, top]) => {
        const root = count === undefined;
        const child = !root && !top;
        const on = icon === "point";
        return (
          <button key={name} className="flex min-h-0 items-center text-left text-[#dcdedf]">
            <span className={`flex h-[22px] w-full items-center rounded-[3px] ${on ? "bg-[#35557c]" : ""}`}>
              <span className="flex w-[18px] shrink-0 items-center self-stretch">
                {root && <ChevronDown size={15} strokeWidth={1.800} aria-hidden="true" />}
                {child && <span className="ml-2 h-full w-px bg-[#394047]" />}
              </span>
              <Svg size={18} className={child ? "ml-[17px]" : ""}>{TREE_ICONS[icon]}</Svg>
              <span className={child ? "ml-2.5" : "ml-[11px]"}>{name}</span>
              {!root && <span className={`ml-auto pr-[5px] ${on ? "text-[#8fa5bd]" : "text-[#747a80]"}`}>{count}</span>}
            </span>
          </button>
        );
      })}
    </div>
  );
}

const VALUES = [
  ["0.222", "-0.628", "-0.917"], ["0.639", "0.216", "-0.132"], ["0.925", "0.555", "0.647"], ["-0.134", "0.489", "0.225"],
  ["0.377", "-0.099", "-0.846"], ["0.429", "-0.004", "0.669"], ["-0.682", "-0.138", "-0.049"], ["-0.238", "0.008", "0.081"],
  ["0.486", "0.673", "-0.594"], ["-0.598", "0.666", "-0.210"], ["-0.275", "-0.795", "-0.086"], ["0.929", "0.837", "-0.419"],
  ["0.012", "-0.092", "0.468"], ["0.518", "0.513", "0.787"], ["0.006", "0.873", "0.546"], ["0.288", "0.214", "-0.573"],
  ["-0.834", "-0.359", "-0.382"], ["0.615", "-0.615", "-0.026"], ["-0.679", "0.190", "0.854"],
];

function Sheet({ rows, wide }) {
  const line = "border-r border-[#0e141b]";
  return (
    <table className={`h-[487px] table-fixed border-collapse text-right ${wide ? "w-full" : "w-[245px]"}`}>
      <colgroup>
        <col className={wide ? "w-[35px]" : "w-[27px]"} /><col className="w-[74px]" /><col className="w-[72px]" /><col className="w-[72px]" />
        {wide && <><col className="w-[73px]" /><col /></>}
      </colgroup>
      <thead>
        <tr className="h-[25px] bg-[#1d252e] text-[#a9adb1]">
          <th className={line} aria-label="索引" />
          <th colSpan={3} className={`text-center font-normal ${line}`}>position</th>
          {wide && <><th className={`text-center font-normal ${line}`}>radius</th><th aria-label="空列" /></>}
        </tr>
      </thead>
      <tbody className="text-[#bfc2c5]">
        {VALUES.map((_, i) => {
          const r = rows[i];
          return (
            <tr key={i} className="bg-[#121a23] even:bg-[#191f29]">
              <td className={`pr-1 ${i % 2 ? "bg-[#222932]" : "bg-[#1c242d]"} ${line}`}>{r ? i : "\u00a0"}</td>
              <td className="pr-1">{r ? r[0] : ""}</td>
              <td className="pr-1">{r ? r[1] : ""}</td>
              <td className={`pr-1 ${line}`}>{r ? r[2] : ""}</td>
              {wide && <><td className={`pr-1 ${line}`}>0.100</td><td /></>}
            </tr>
          );
        })}
      </tbody>
    </table>
  );
}

function Spreadsheet({ wide, points }) {
  return (
    <section className={`flex shrink-0 flex-col overflow-hidden rounded-md bg-[#0d141b] ${wide ? "w-[578px]" : "w-[424px]"}`}>
      <header className="flex h-[31px] items-center bg-[#15222c] pl-2 pr-2.5">
        <button aria-label="编辑器类型" className={`${dark} w-[38px] gap-0.5`}><SheetIcon /><Chevron /></button>
        <Pick label="数据来源" options={["已解算"]} className="ml-2 w-[107px] pl-2 pr-1" />
        <span className="ml-2.5"><ObjectIcon /></span>
        <span className="ml-[11px] w-[55px] whitespace-nowrap text-[#d0d3d6]">平面.003</span>
        <IconButton label="固定" className="ml-4 w-[26px]"><Pin size={19} strokeWidth={1.500} className="rotate-45 text-[#7d858c]" /></IconButton>
        <IconButton label="仅选中项" className="ml-auto w-6"><CursorIcon /></IconButton>
        <IconButton label="过滤" className="w-[23px] rounded-sm bg-[#27457a]"><Funnel size={18} strokeWidth={1.500} className="text-[#e6eaf0]" /></IconButton>
      </header>
      <div className="flex h-[482px]">
        <div className={`shrink-0 ${wide ? "w-[194px] pl-2" : "w-[192px] pl-[7px]"}`}><DomainTree points={points} /></div>
        <div className="relative min-w-0 flex-1 overflow-hidden">
          <Sheet rows={wide ? VALUES : [["0.000", "0.000", "0.000"]]} wide={wide} />
          <ChevronLeft size={12} className="absolute right-0 top-[19px] text-[#7d838a]" aria-hidden="true" />
          {wide
            ? <div className="absolute right-px top-[27px] h-[93px] w-1 rounded bg-[#1f2731]" />
            : <div className="absolute bottom-1 left-[37px] h-1 w-[135px] rounded bg-[#242b35]" />}
        </div>
      </div>
      <footer className="flex h-[31px] items-center justify-end bg-[#15222c] pr-2.5 text-[#d6d8da]">
        <span>行: {points}</span><span className="mx-3 h-4 w-px bg-[#a9adb1]" /><span>列: 2</span>
      </footer>
    </section>
  );
}

/* ---------- canvas cards ---------- */

function Card({ title, padClass, viewport, graph, groupClass, sheet, noteClass, note }) {
  return (
    <figure className="min-w-0 flex-1">
      <figcaption className="h-[34px] pt-1.5 font-['Open_Sans'] text-[17px] leading-6 text-[#666]">{title}</figcaption>
      <div className={`flex flex-col gap-1 overflow-hidden rounded-lg border-2 border-[#747474] bg-[#090f15] ${padClass}`}>
        {viewport}
        <div className="flex h-[544px] gap-1">
          <NodeEditor groupClass={groupClass}>{graph}</NodeEditor>
          {sheet}
        </div>
      </div>
      <p className={`mt-0.5 rounded-lg border-2 border-[#6a6a6a] bg-[#1e1e1e] text-[15px] text-[#dadada] ${noteClass}`}>{note}</p>
    </figure>
  );
}

export default function App() {
  return (
    <main className="flex min-h-screen gap-[3px] overflow-hidden bg-[#1e1e1e] bg-[radial-gradient(circle,#2f2f2f_1px,transparent_1px)] bg-[length:19px_19px] bg-[position:-7px_7px] px-5 font-[Inter,'Noto_Sans_CJK_SC',sans-serif] text-[13px]">
      <Card
        title="Pasted image 20240826175343.png"
        padClass="px-px"
        viewport={<Viewport lines={["正交顶视图 (局部)", "(1) Collection | 平面.003", "分米"]} />}
        graph={<SingleGraph />}
        groupClass="ml-[92px]"
        sheet={<Spreadsheet points={1} />}
        noteClass="ml-[605px] w-[235px] px-[22px] pb-0.5 pt-[6px] leading-[22px]"
        note={<>生成一个点，位置为<br />（0,0,0）</>}
      />
      <Card
        title="Pasted image 20240826175445.png"
        padClass="pl-0.5"
        viewport={<Viewport user lines={["用户透视 (局部)", "(1) Collection | 平面.003"]} />}
        graph={<RandomGraph />}
        groupClass="ml-5"
        sheet={<Spreadsheet wide points={100} />}
        noteClass="ml-[458px] w-[447px] px-[22px] pb-1.5 pt-2.5 leading-6"
        note={<>在（-1,-1,-1）和（1,1,1）矢量范围内，生成随机的位置矢<br />量然后将位置给到点的位置，生成随机位置的点。</>}
      />
    </main>
  );
}
